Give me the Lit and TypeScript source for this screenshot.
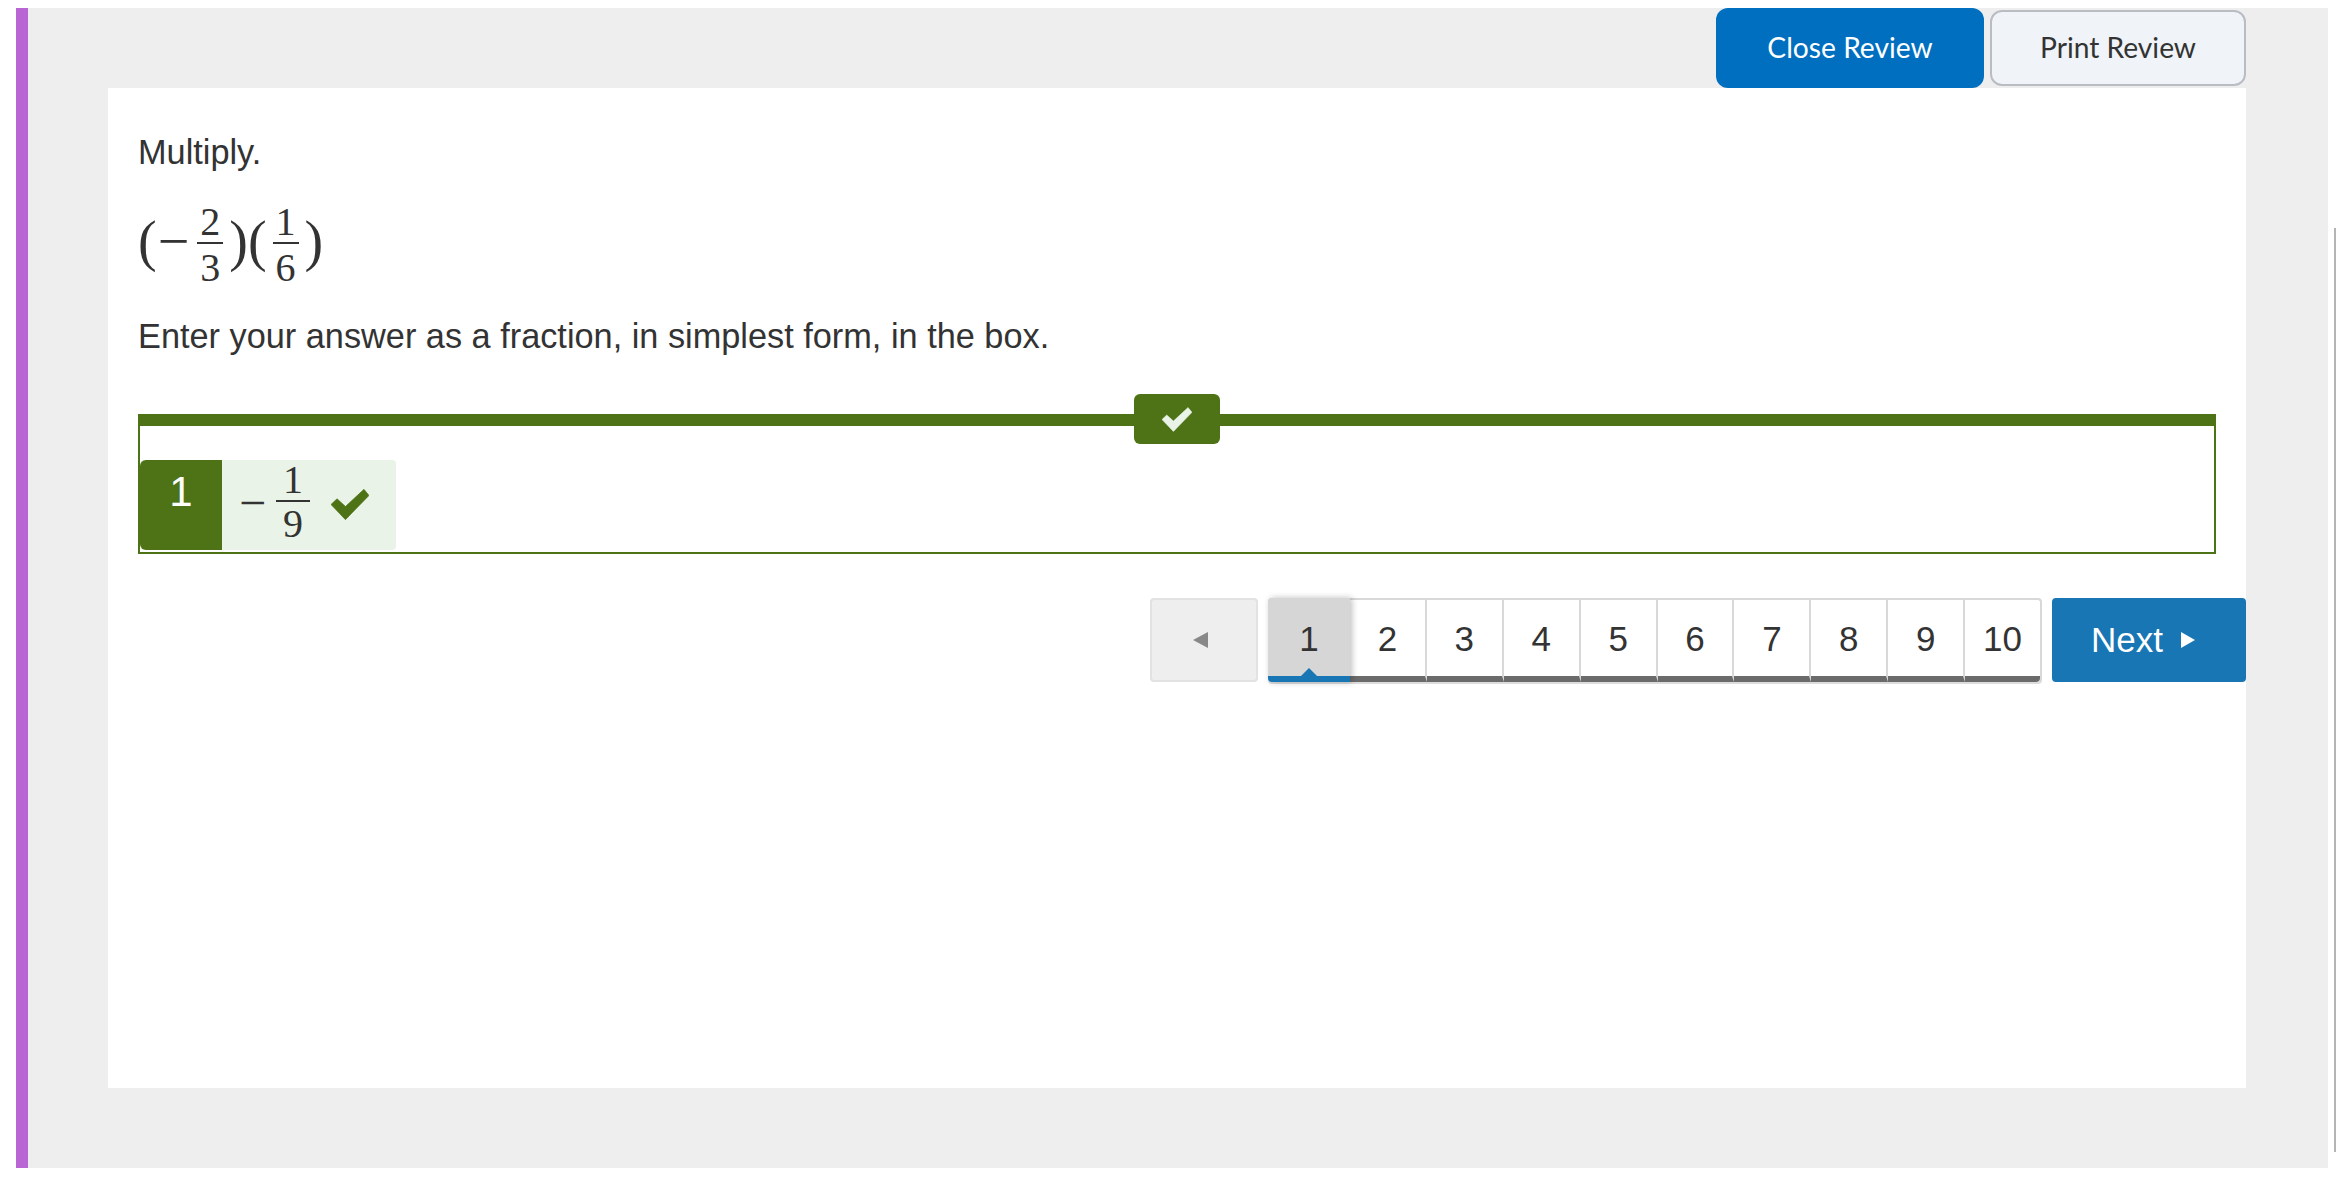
import { LitElement, html, css, svg } from 'lit';
import { customElement, property } from 'lit/decorators.js';

const checkIcon = svg`<polygon points="632,372 650,355 675,378 730,327 745,345 675,417" fill="currentColor" stroke="currentColor" stroke-width="2" stroke-linejoin="round"></polygon>`;

const pages = [1, 2, 3, 4, 5, 6, 7, 8, 9, 10];

@customElement('math-frac')
export class MathFrac extends LitElement {
  static styles = css`
    :host {
      display: inline-flex;
      flex-direction: column;
      align-items: stretch;
      text-align: center;
      font-family: 'Liberation Serif', serif;
      color: #333;
    }

    .num,
    .den {
      line-height: 1;
    }

    .den {
      border-top: var(--frac-bar, 2px) solid #333;
      padding-top: var(--frac-gap, 2px);
    }
  `;

  @property() num = '';
  @property() den = '';

  render() {
    return html`<span class="num">${this.num}</span><span class="den">${this.den}</span>`;
  }
}

@customElement('page-nav')
export class PageNav extends LitElement {
  static styles = css`
    :host {
      display: flex;
      justify-content: flex-end;
      align-items: flex-start;
      gap: 10px;
      height: 84px;
      font-family: 'Liberation Sans', Arial, sans-serif;
      font-size: 35px;
      color: #333;
    }

    .prev {
      width: 108px;
      height: 84px;
      box-sizing: border-box;
      display: flex;
      align-items: center;
      justify-content: center;
      padding-right: 8px;
      background: #eeeeee;
      border: 2px solid #e2e2e2;
      border-radius: 4px;
      color: #888;
    }

    .pages {
      display: flex;
      box-sizing: border-box;
      height: 84px;
      width: 774px;
      border: solid #d8d8d8;
      border-width: 2px 2px 0 0;
      border-radius: 4px;
      background: #fff;
      box-shadow: 0 2px 0 #dddddd;
    }

    .page {
      position: relative;
      box-sizing: border-box;
      flex: 1;
      display: flex;
      align-items: center;
      justify-content: center;
      padding-top: 2px;
      border-right: 2px solid #d8d8d8;
      border-bottom: 6px solid #6b6b6b;
    }

    .page:last-child {
      border-right: none;
      border-bottom-right-radius: 4px;
    }

    .page.current {
      flex: 0 0 82px;
      margin-top: -2px;
      padding-top: 4px;
      background: #d6d6d6;
      border-right: none;
      border-bottom-color: #1776b3;
      border-radius: 4px 0 0 4px;
      box-shadow: 2px 0 6px rgba(0, 0, 0, 0.25);
      z-index: 1;
    }

    .page.current::after {
      content: '';
      position: absolute;
      left: 33px;
      bottom: 0;
      border: solid transparent;
      border-width: 0 8px 8px;
      border-bottom-color: #1776b3;
    }

    .next {
      width: 194px;
      height: 84px;
      box-sizing: border-box;
      display: flex;
      align-items: center;
      justify-content: center;
      gap: 18px;
      padding-right: 12px;
      background: #1776b3;
      color: #fff;
      border-radius: 4px;
    }

    svg {
      display: block;
      fill: currentColor;
    }
  `;

  render() {
    return html`
      <div class="prev">
        <svg width="15" height="16" viewBox="0 0 15 16"><polygon points="15,0 15,16 0,8"></polygon></svg>
      </div>
      <div class="pages">
        ${pages.map(
          (p) => html`<div class="page ${p === 1 ? 'current' : ''}">${p}</div>`
        )}
      </div>
      <div class="next">
        <span>Next</span>
        <svg width="14" height="16" viewBox="0 0 14 16"><polygon points="0,0 14,8 0,16"></polygon></svg>
      </div>
    `;
  }
}

@customElement('app-root')
export class AppRoot extends LitElement {
  static styles = css`
    :host {
      display: block;
      position: relative;
      height: 1184px;
      background: #fff;
      overflow: hidden;
    }

    .shell {
      box-sizing: border-box;
      height: 1160px;
      margin: 8px 8px 0 16px;
      padding: 0 82px 0 80px;
      border-left: 12px solid #b766d3;
      background: #eeeeee;
    }

    .toolbar {
      display: flex;
      justify-content: flex-end;
      align-items: center;
      gap: 6px;
      height: 80px;
      font-family: Lato, sans-serif;
      font-size: 28.2px;
    }

    .close,
    .print {
      box-sizing: border-box;
      display: flex;
      align-items: center;
      justify-content: center;
      padding-bottom: 2px;
    }

    .close {
      width: 268px;
      height: 80px;
      background: #006fbf;
      color: #fff;
      border-radius: 12px;
    }

    .print {
      width: 256px;
      height: 76px;
      background: #f0f3f8;
      color: #333;
      border: 2px solid #b9bcc2;
      border-radius: 12px;
    }

    .card {
      box-sizing: border-box;
      height: 1000px;
      padding: 42px 0 0 30px;
      background: #fff;
      font-family: 'Liberation Sans', Arial, sans-serif;
      font-size: 34.3px;
      color: #333;
    }

    p {
      margin: 0;
      line-height: 44px;
    }

    .expr {
      display: flex;
      align-items: center;
      height: 90px;
      margin: 26px 0 24px;
      font-family: 'Liberation Serif', serif;
      font-size: 56px;
      line-height: 1;
    }

    .expr .paren {
      margin-bottom: 8px;
    }

    .expr math-frac {
      width: 26px;
      font-size: 40px;
      --frac-bar: 2px;
      --frac-gap: 4px;
      margin: 0 6px;
    }

    .expr .minus {
      margin: 0 2px 8px 1px;
    }

    .frame {
      position: relative;
      box-sizing: border-box;
      height: 140px;
      margin: 56px 30px 44px 0;
      padding-top: 34px;
      border: 2px solid #4d7316;
      border-top-width: 12px;
    }

    .badge {
      position: absolute;
      top: -32px;
      left: 50%;
      transform: translateX(-50%);
      width: 86px;
      height: 50px;
      display: flex;
      align-items: center;
      justify-content: center;
      background: #4d7316;
      border-radius: 6px;
      color: #e9f3e7;
    }

    .badge svg {
      width: 30px;
      height: 25px;
    }

    .chip {
      display: flex;
      width: 256px;
      height: 90px;
      background: #e9f3e7;
      border-radius: 4px;
    }

    .chip-num {
      flex: 0 0 82px;
      box-sizing: border-box;
      padding-top: 10px;
      text-align: center;
      font-size: 42px;
      line-height: 44px;
      color: #fff;
      background: #4d7316;
      border-radius: 6px 0 0 6px;
    }

    .chip-value {
      display: flex;
      align-items: center;
      padding-left: 17px;
      font-family: 'Liberation Serif', serif;
      color: #333;
    }

    .chip-value .minus {
      font-size: 48px;
      line-height: 1;
      margin-right: 10px;
      margin-bottom: 4px;
    }

    .chip-value math-frac {
      width: 34px;
      font-size: 40px;
      margin-bottom: 7px;
      --frac-bar: 2px;
      --frac-gap: 2px;
    }

    .chip-value svg {
      width: 38px;
      height: 31px;
      margin-left: 21px;
      margin-bottom: 2px;
      color: #4d7316;
    }

    .scroll-thumb {
      position: absolute;
      top: 228px;
      right: 0;
      width: 2px;
      height: 924px;
      background: #b4b4b4;
    }
  `;

  render() {
    return html`
      <div class="shell">
        <div class="toolbar">
          <div class="close">Close Review</div>
          <div class="print">Print Review</div>
        </div>
        <div class="card">
          <p>Multiply.</p>
          <div class="expr">
            <span class="paren">(</span><span class="minus">−</span>
            <math-frac num="2" den="3"></math-frac>
            <span class="paren">)</span><span class="paren">(</span>
            <math-frac num="1" den="6"></math-frac>
            <span class="paren">)</span>
          </div>
          <p>Enter your answer as a fraction, in simplest form, in the box.</p>
          <div class="frame">
            <div class="badge">
              <svg viewBox="632 327 113 90">${checkIcon}</svg>
            </div>
            <div class="chip">
              <div class="chip-num">1</div>
              <div class="chip-value">
                <span class="minus">−</span>
                <math-frac num="1" den="9"></math-frac>
                <svg viewBox="632 327 113 90">${checkIcon}</svg>
              </div>
            </div>
          </div>
          <page-nav></page-nav>
        </div>
      </div>
      <div class="scroll-thumb"></div>
    `;
  }
}

declare global {
  interface HTMLElementTagNameMap {
    'app-root': AppRoot;
    'page-nav': PageNav;
    'math-frac': MathFrac;
  }
}
